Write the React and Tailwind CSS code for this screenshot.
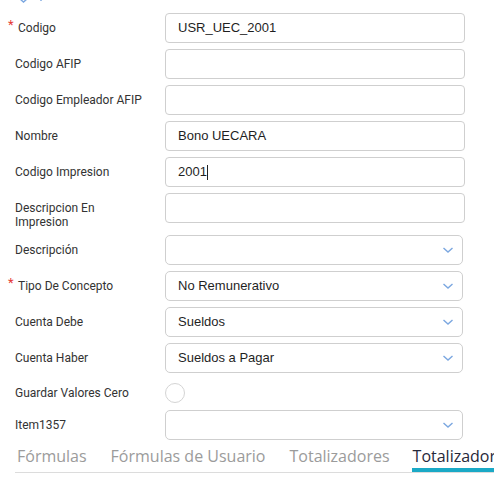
import React from 'react';

const Chevron = () => (
    <svg width="12" height="8" viewBox="0 0 12 8" className="absolute right-[8px] top-1/2 -translate-y-1/2">
        <path d="M1.5 2 L6 6 L10.5 2" fill="none" stroke="#7ba7e0" strokeWidth="1.4" />
    </svg>
);

const TextInput = ({ value, caret }) => (
    <div className="w-[300px] h-[30px] border border-[#cfcfcf] rounded-[4px] bg-white flex items-center pl-[12px] text-[13px] text-[#1f1f1f] font-['Liberation_Sans',sans-serif]">
        {value}
        {caret && <span className="inline-block w-px h-[15px] bg-[#222]" />}
    </div>
);

const Select = ({ value }) => (
    <div className="relative w-[298px] h-[30px] border border-[#cfcfcf] rounded-[5px] bg-white flex items-center pl-[12px] text-[13px] text-[#1f1f1f] font-['Liberation_Sans',sans-serif]">
        {value}
        <Chevron />
    </div>
);

const Row = ({ label, required, children, tall }) => (
    <div className={`flex ${tall ? 'items-start min-h-[36px]' : 'items-center min-h-[30px]'}`}>
        <div className={`relative w-[165px] shrink-0 pl-[15px] text-[12px] leading-[14px] text-[#333] ${tall ? 'pt-[8px]' : ''}`}>
            {required && <span className="absolute left-[8px] top-[-3px] text-[#e53935] text-[13px]">*</span>}
            <span className={required ? 'pl-[3px]' : ''}>{label}</span>
        </div>
        {children}
    </div>
);

export default function App() {
    const tabs = ['Fórmulas', 'Fórmulas de Usuario', 'Totalizadores'];
    return (
        <div className="w-[494px] h-[483px] bg-white overflow-hidden font-['Roboto',sans-serif] relative">
            <div className="h-[13px] relative">
                <svg width="30" height="6" className="absolute left-[18px] top-[-2px]">
                    <path d="M2 1 L5.5 4 L9 1" fill="none" stroke="#7ba7e0" strokeWidth="1.4" />
                    <path d="M23 0 L23 3" stroke="#7ba7e0" strokeWidth="1.4" />
                </svg>
            </div>
            <div className="flex flex-col gap-[6px]">
                <Row label="Codigo" required><TextInput value="USR_UEC_2001" /></Row>
                <Row label="Codigo AFIP"><TextInput /></Row>
                <Row label="Codigo Empleador AFIP"><TextInput /></Row>
                <Row label="Nombre"><TextInput value="Bono UECARA" /></Row>
                <Row label="Codigo Impresion"><TextInput value="2001" caret /></Row>
                <Row label={<>Descripcion En<br />Impresion</>} tall>
                    <TextInput />
                </Row>
                <Row label="Descripción"><Select /></Row>
                <Row label="Tipo De Concepto" required><Select value="No Remunerativo" /></Row>
                <Row label="Cuenta Debe"><Select value="Sueldos" /></Row>
                <Row label="Cuenta Haber"><Select value="Sueldos a Pagar" /></Row>
                <div className="flex items-center h-[25px]">
                    <div className="w-[165px] shrink-0 pl-[15px] pt-[2px] text-[12px] text-[#333]">Guardar Valores Cero</div>
                    <div className="mt-[3px] w-[20px] h-[20px] rounded-full border border-[#d4d4d4] bg-white" />
                </div>
                <Row label="Item1357"><Select /></Row>
            </div>
            <div className="ml-[15px] mt-[4px] flex border-b border-[#dcdcdc] font-['Open_Sans',sans-serif] text-[16px] whitespace-nowrap">
                {tabs.map((t) => (
                    <div key={t} className="pl-[2px] pr-[22px] pb-[3px] text-[#9b9b9b]">{t}</div>
                ))}
                <div className="px-[1px] pb-0 text-[#26283a] border-b-[4px] border-[#1aa9c6]">Totalizadores</div>
            </div>
        </div>
    );
}
